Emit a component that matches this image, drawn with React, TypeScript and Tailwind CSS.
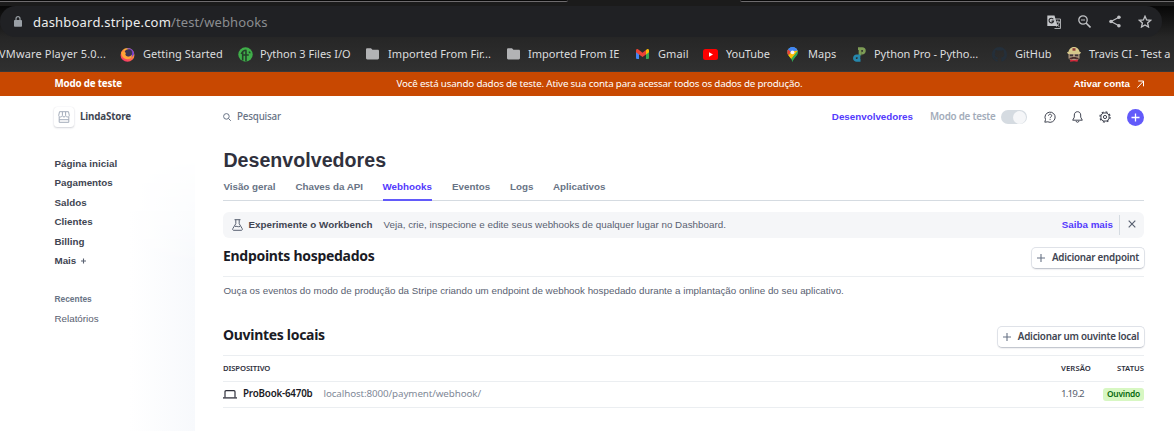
import React, { type ReactNode } from 'react';

const noto = "font-['Noto_Sans',sans-serif]";

function GettingStartedIcon() {
  return (
    <svg width="15" height="15" viewBox="0 0 16 16">
      <defs>
        <linearGradient id="fox" x1="0.8" y1="0" x2="0.3" y2="1">
          <stop offset="0" stopColor="#ffd43c" />
          <stop offset="0.45" stopColor="#ff8a3d" />
          <stop offset="1" stopColor="#f5306a" />
        </linearGradient>
      </defs>
      <circle cx="8" cy="8.4" r="7.4" fill="url(#fox)" />
      <path d="M7 1.6c3.500-1.400 8 1 8 6-1 2-2 3-3.500 3.500C13 6 11 3 7 1.600z" fill="#7a3fd0" />
      <circle cx="9" cy="6.400" r="4" fill="#3b3554" />
      <path d="M1.500 5C3 5 5 4.500 6.500 6.500 5 8 6 10 8.500 10.300c2 .2 3.500-1 4-2.300.6 3-1.500 5-4.500 5C3.500 13 1 9 1.500 5z" fill="#ffa436" />
    </svg>
  );
}

function PythonFilesIcon() {
  return (
    <svg width="15" height="15" viewBox="0 0 16 16">
      <circle cx="8" cy="8" r="7.700" fill="#3fae49" />
      <path d="M3.500 7.500c1-2.800 3-4 5.500-4M8.500 3.500v12M5 5.500v9M5.500 8.500h6M11.500 5.500c.8 0 1.200.5 1.200 1.200" stroke="#24402a" strokeWidth="1.700" fill="none" />
    </svg>
  );
}

function FolderIcon() {
  return (
    <svg width="13" height="12" viewBox="0 0 13 12">
      <path d="M0 1.500C0 .7.600.3 1.300.3H5l1.400 1.500h5.300c.8 0 1.300.5 1.300 1.200v7c0 .9-.5 1.400-1.300 1.400H1.300C.5 11.400 0 10.900 0 10.100z" fill="#b2b3b5" />
    </svg>
  );
}

function GmailIcon() {
  return (
    <svg width="13" height="10" viewBox="0 0 13 10">
      <path d="M0 1.500 3 3.800V10H1a1 1 0 0 1-1-1z" fill="#4285f4" />
      <path d="M13 1.500 10 3.800V10h2a1 1 0 0 0 1-1z" fill="#34a853" />
      <path d="M10 1l1-.7c1-.7 2 0 2 1.200v1.700L10 5.500z" fill="#fbbc04" />
      <path d="M0 3.200V1.500C0 .3 1 -.4 2 .3l4.500 3.400L10 1v4.500L6.500 8 3 5.500z" fill="#ea4335" />
    </svg>
  );
}

function YouTubeIcon() {
  return (
    <svg width="15" height="11" viewBox="0 0 15 11">
      <rect width="15" height="11" rx="2.500" fill="#f00" />
      <path d="M6 3.200v4.600l4-2.300z" fill="#fff" />
    </svg>
  );
}

function MapsIcon() {
  return (
    <svg width="11" height="15" viewBox="0 0 11 15">
      <defs>
        <clipPath id="pin">
          <path d="M5.500 0A5.300 5.300 0 0 0 .2 5.300C.2 9 4.500 10.500 5.500 15c1-4.500 5.300-6 5.300-9.700A5.300 5.300 0 0 0 5.500 0z" />
        </clipPath>
      </defs>
      <g clipPath="url(#pin)">
        <path d="M0 0h11v15H0z" fill="#34a853" />
        <path d="M0 0h11v4L5 8 0 4z" fill="#4285f4" />
        <path d="M0 1.500 4 5 1.500 8.500 0 7z" fill="#ea4335" />
        <path d="M1 8.800 8 .8 11 4 4 12z" fill="#fbbc04" />
        <path d="M3 0h8v3.500L7.500 4 4 4z" fill="#4285f4" />
        <path d="M6 10 11 3.500V11L5 15z" fill="#34a853" />
      </g>
      <circle cx="5.500" cy="5.300" r="1.900" fill="#f5f5f5" />
    </svg>
  );
}

function PythonProIcon() {
  return (
    <svg width="13" height="15" viewBox="0 0 13 15">
      <path d="M7 8.500V2.500M5 1.700h4.200a2.200 2.200 0 1 1 0 4.400H8.500" stroke="#7d9c55" strokeWidth="2.700" fill="none" />
      <path d="M6 7.500V11a2.300 2.300 0 1 1-2.300-2.200h1M4 13.400h3.500" stroke="#2688ad" strokeWidth="2.700" fill="none" />
    </svg>
  );
}

function GitHubIcon() {
  return (
    <svg width="15" height="15" viewBox="0 0 16 16">
      <path fill="#242f3a" d="M8 0C3.580 0 0 3.580 0 8c0 3.540 2.290 6.530 5.470 7.590.4.070.55-.17.55-.38 0-.19-.01-.82-.01-1.490-2.010.37-2.530-.49-2.690-.94-.09-.23-.48-.94-.82-1.130-.28-.15-.68-.52-.01-.53.63-.01 1.080.58 1.230.82.720 1.210 1.870.87 2.330.66.070-.52.280-.87.510-1.070-1.780-.2-3.640-.89-3.640-3.950 0-.87.310-1.590.82-2.150-.08-.2-.36-1.020.08-2.120 0 0 .67-.21 2.200.82.640-.18 1.320-.27 2-.27s1.360.09 2 .27c1.530-1.040 2.200-.82 2.200-.82.440 1.100.160 1.920.080 2.120.510.560.820 1.270.820 2.150 0 3.070-1.870 3.750-3.650 3.950.290.250.540.730.540 1.480 0 1.070-.01 1.930-.01 2.200 0 .21.150.46.550.38A8.010 8.010 0 0 0 16 8c0-4.420-3.580-8-8-8z" />
    </svg>
  );
}

function TravisIcon() {
  return (
    <svg width="14" height="15" viewBox="0 0 14 15">
      <path d="M1.500 5C2 1.500 4.500 0 7 0s5 1.500 5.500 5z" fill="#d9cb8b" />
      <path d="M5.500 1.200h3v2.500h-3z" fill="#8c3a38" />
      <path d="M0 5.200c3-1.400 11-1.400 14 0l-1 1.800H1z" fill="#d5c68b" />
      <path d="M1.500 7h11v4.500l-2.500 2H4l-2.500-2z" fill="#a9937c" />
      <path d="M2.800 7.500h3.200v1.700H2.800zM8 7.500h3.200v1.700H8z" fill="#3e3434" />
      <path d="M2 11.500c2-2 8-2 10 0-1 .9-3 .9-5 .3-2 .6-4 .6-5-.3z" fill="#4a2c2c" />
      <path d="M3.500 12.500 7 13.200l4-.7-.5 2.300L7 14.200l-4 .6z" fill="#d8283b" />
    </svg>
  );
}

type BookmarkProps = { icon?: ReactNode; label: string; slot: string; iconSlot?: string };

function Bookmark({ icon, label, slot, iconSlot = 'w-[22.5px]' }: BookmarkProps) {
  return (
    <div className={`flex shrink-0 items-center ${slot}`}>
      {icon && <span className={`flex shrink-0 items-center ${iconSlot}`}>{icon}</span>}
      <span>{label}</span>
    </div>
  );
}

function BrowserChrome() {
  return (
    <header className={`flex h-[72px] w-full flex-col bg-[#2d2d2d] ${noto}`}>
      <div className="flex h-[6px] shrink-0 justify-between bg-[#1b1b1b]">
        <div className="h-[2px] w-[568px] rounded-br border-b border-[#6d6b6d] bg-[#080808]" />
        <div className="h-[2px] w-[434px] rounded-bl border-b border-[#6d6b6d] bg-[#080808]" />
      </div>
      <div className="flex h-[31px] shrink-0 bg-linear-to-b from-[#080808] to-[#262626]">
        <div className="flex w-[1162px] items-center rounded-full bg-[#202124] pl-[14px]">
          <svg width="8" height="11" viewBox="0 0 8 11">
            <path d="M2 5V2.700a2 2 0 0 1 4 0V5" stroke="#9aa0a6" strokeWidth="1.200" fill="none" />
            <rect y="4" width="8" height="6.700" rx="0.800" fill="#9aa0a6" />
          </svg>
          <div className="ml-[11px] flex-1 text-[13px] leading-[18px]">
            <span className="tracking-[0.2px] text-[#eceded]">dashboard.stripe.com</span>
            <span className="tracking-[0.1px] text-[#8b8d90]">/test/webhooks</span>
          </div>
          <div className="mr-[10px] flex items-center text-[#c0c2c5]">
            <svg className="mr-[17px]" width="14" height="14" viewBox="0 0 14 14">
              <path d="M5 4h8.500v9.500H7.500" fill="none" stroke="#a9abad" />
              <path d="M.3.500h7.200l3 10.500H.3z" fill="#c5c7ca" />
              <path d="M6.300 4.300a2.300 2.300 0 1 0 .3 1.800H4.500" fill="none" stroke="#202124" strokeWidth="1.100" />
              <path d="M8.500 7h4.500M10.800 5.500V7M12.300 7c-.4 2-1.500 3.500-3 4.500M9.300 8.500c.7 1.500 1.700 2.500 3.200 3.300" fill="none" stroke="#c5c7ca" strokeWidth="0.900" />
            </svg>
            <svg className="mr-[18px]" width="13" height="13" viewBox="0 0 13 13" fill="none" stroke="currentColor">
              <circle cx="5" cy="5" r="4.200" strokeWidth="1.300" />
              <path d="M3 5h4" strokeWidth="1" />
              <path d="m8 8 4.500 4.500" strokeWidth="1.600" />
            </svg>
            <svg className="mr-[17px]" width="12" height="13" viewBox="0 0 12 13" fill="currentColor">
              <path d="M10 2.200 2 6.500 10 10.800" fill="none" stroke="currentColor" strokeWidth="1.200" />
              <circle cx="9.900" cy="2.200" r="1.800" />
              <circle cx="2" cy="6.500" r="1.800" />
              <circle cx="9.900" cy="10.800" r="1.800" />
            </svg>
            <svg width="14" height="13" viewBox="0 0 14 13">
              <path d="m7 1.200 1.600 3.700 4 .4-3 2.700.9 4L7 9.900 3.500 12l.9-4-3-2.700 4-.4z" fill="none" stroke="currentColor" strokeWidth="1.300" />
            </svg>
          </div>
        </div>
      </div>
      <nav className="flex h-[35px] items-center overflow-hidden border-b border-[#38383a] bg-linear-to-b from-[#262626] to-[#303030] text-[11px] leading-4 whitespace-nowrap text-[#dcdddf]">
        <Bookmark label="VMware Player 5.0..." slot="-ml-px w-[121px] tracking-[0.15px]" />
        <Bookmark icon={<GettingStartedIcon />} label="Getting Started" slot="w-[118px] tracking-[0.05px]" iconSlot="w-[23px]" />
        <Bookmark icon={<PythonFilesIcon />} label="Python 3 Files I/O" slot="w-[128px]" iconSlot="w-[22px]" />
        <Bookmark icon={<FolderIcon />} label="Imported From Fir..." slot="w-[141px] tracking-[0.06px]" iconSlot="w-[22px]" />
        <Bookmark icon={<FolderIcon />} label="Imported From IE" slot="w-[129px]" iconSlot="w-[21px]" />
        <Bookmark icon={<GmailIcon />} label="Gmail" slot="w-[67px] tracking-[0.1px]" iconSlot="w-[22px]" />
        <Bookmark icon={<YouTubeIcon />} label="YouTube" slot="w-[84px] tracking-[-0.1px]" iconSlot="w-[23px]" />
        <Bookmark icon={<MapsIcon />} label="Maps" slot="w-[66px]" iconSlot="w-[21px]" />
        <Bookmark icon={<PythonProIcon />} label="Python Pro - Pytho..." slot="w-[139px] tracking-[-0.03px]" iconSlot="w-[21px]" />
        <Bookmark icon={<GitHubIcon />} label="GitHub" slot="w-[75px]" iconSlot="w-[23px]" />
        <Bookmark icon={<TravisIcon />} label="Travis CI - Test a" slot="w-[107px] tracking-[-0.05px]" iconSlot="w-[22px]" />
      </nav>
    </header>
  );
}

function TestModeBar() {
  return (
    <div className="grid h-6 grid-cols-[1fr_auto_1fr] items-center bg-[#c84801] pr-[30px] pl-[54.5px] text-[9.8px] text-white">
      <span className={`font-bold tracking-[-0.19px] ${noto}`}>Modo de teste</span>
      <span className={`ml-[0.5px] tracking-[-0.181px] ${noto}`}>
        Você está usando dados de teste. Ative sua conta para acessar todos os dados de produção.
      </span>
      <span className="flex items-center justify-end gap-[7px] font-bold">
        Ativar conta
        <svg width="7" height="8" viewBox="0 0 7 8" fill="none" stroke="currentColor" strokeWidth="1">
          <path d="M.4 7.600 6.300 1.300M1.200 1h5.300v5.300" />
        </svg>
      </span>
    </div>
  );
}

const navItems = ['Página inicial', 'Pagamentos', 'Saldos', 'Clientes', 'Billing'];

function Sidebar() {
  return (
    <aside className="relative w-[195px] shrink-0 pl-[54.5px]">
      <div className="absolute top-[60px] right-0 bottom-0 w-[65px] bg-linear-to-r from-white to-[#f7f9fc] mask-[linear-gradient(to_bottom,transparent,black_110px)]" />
      <div className="relative flex h-[42px] items-center">
        <div className="-ml-[0.5px] flex h-5 w-5 items-center justify-center rounded-[3px] bg-white shadow-[0_1px_2px_rgba(60,66,87,0.22),0_0_1px_rgba(60,66,87,0.12)]">
          <svg width="12" height="12" viewBox="0 0 12 12" fill="none" stroke="#a3acba">
            <path d="M1.500.7h9l.8 3.800c0 1-.6 1.500-1.500 1.500S8 5.500 7.600 4.800C7.300 5.500 6.800 6 6 6s-1.300-.5-1.600-1.200C4 5.500 3.200 6 2.300 6S.7 5.500.7 4.500zM4.400.7v4M7.600.7v4M1.200 6v5.300h9.600V6M1.200 8.700h9.600" />
          </svg>
        </div>
        <span className={`ml-[6px] text-[9.8px] font-bold tracking-[-0.164px] text-[#414552] ${noto}`}>LindaStore</span>
      </div>
      <nav className="relative mt-[15.500px] flex flex-col text-[9.8px] leading-[19.5px] font-bold text-[#414552]">
        {navItems.map((item) => (
          <span key={item}>{item}</span>
        ))}
        <span className="flex items-center gap-[5px]">
          Mais
          <svg width="5" height="6" viewBox="0 0 5 6" stroke="#596171" strokeWidth="1.100">
            <path d="M2.500.5v5M0 3h5" />
          </svg>
        </span>
        <span className="mt-[19.500px] text-[8.4px] text-[#687385]">Recentes</span>
        <span className="-mt-px font-normal text-[#596171]">Relatórios</span>
      </nav>
    </aside>
  );
}

function TopBar() {
  return (
    <div className={`flex h-[42px] items-center text-[9.8px] ${noto}`}>
      <svg className="mb-px" width="8" height="8" viewBox="0 0 8 8" fill="none" stroke="#687385" strokeWidth="1">
        <circle cx="3.400" cy="3.400" r="2.800" />
        <path d="m5.500 5.500 2.300 2.300" />
      </svg>
      <span className="ml-[6px] flex-1 font-medium tracking-[-0.2px] text-[#687385]">Pesquisar</span>
      <span className="font-['Liberation_Sans',sans-serif] font-bold text-[#533afd]">Desenvolvedores</span>
      <span className="ml-[17px] font-semibold tracking-[-0.233px] text-[#a3acba]">Modo de teste</span>
      <span className="ml-[5px] flex h-[14px] w-[26px] items-center justify-end rounded-full bg-[#d5dbe1] pr-[0.5px]">
        <span className="h-[13px] w-[13px] rounded-full bg-[#f5f6f8]" />
      </span>
      <svg className="ml-[17px]" width="12" height="12" viewBox="0 0 12 12" fill="none" stroke="#414552">
        <path d="M.8 11.200 1.500 8.500A5.100 5.100 0 1 1 3.800 10.800z" />
        <path d="M4.500 4.700c0-2 3.200-2 3.200 0C7.700 6 6.100 5.800 6.100 7.200M6.100 8.100v1" />
      </svg>
      <svg className="ml-4" width="11" height="12" viewBox="0 0 11 12" fill="none" stroke="#414552">
        <path d="M5.500.7C3.500.7 2.300 2.200 2.300 4v2.200L.7 9.200h9.600L8.700 6.200V4c0-1.800-1.200-3.300-3.200-3.300zM4 10c.3 1.700 2.700 1.700 3 0" />
      </svg>
      <svg className="ml-[16.500px]" width="12" height="12" viewBox="0 0 12 12" fill="none" stroke="#414552">
        <circle cx="6" cy="6" r="1.600" />
        <circle cx="6" cy="6" r="4.100" />
        <circle cx="6" cy="6" r="5.100" strokeWidth="1.200" strokeDasharray="2 2.005" />
      </svg>
      <span className="ml-4 flex h-[17px] w-[17px] items-center justify-center rounded-full bg-[#625afa]">
        <svg width="9" height="9" viewBox="0 0 9 9" stroke="white" strokeWidth="1.300">
          <path d="M4.500.5v8M.5 4.500h8" />
        </svg>
      </span>
    </div>
  );
}

function Tabs() {
  return (
    <div className="flex h-[24px] shrink-0 border-b border-[#d5dbe1] text-[9.8px] leading-[19px] font-bold text-[#687385]">
      <span className="w-[72px] pl-[0.4px]">Visão geral</span>
      <span className="w-[87.500px] pl-[0.4px]">Chaves da API</span>
      <span className="mr-[20px] h-6 w-[49.500px] border-b-2 border-[#625afa] text-[#533afd]">Webhooks</span>
      <span className="w-[58px]">Eventos</span>
      <span className="w-[43px]">Logs</span>
      <span className="tracking-[0.03px]">Aplicativos</span>
    </div>
  );
}

function WorkbenchBanner() {
  return (
    <div className="mt-[11px] flex h-[26px] shrink-0 items-center rounded-[6px] bg-[#f5f6f8] pl-[9px] text-[9.8px] text-[#596171]">
      <svg width="11" height="12" viewBox="0 0 11 12" fill="none" stroke="#596171">
        <path d="M2.500.7h6M3.800.7v4L.8 9.600c-.5.900-.1 1.700.8 1.700h7.800c.9 0 1.300-.8.800-1.700L7.200 4.700v-4M3 7.500c1.500-.8 2.500.8 5 0" />
      </svg>
      <span className="ml-[5.500px] font-bold tracking-[0.026px] text-[#414552]">Experimente o Workbench</span>
      <span className="ml-[11px] flex-1 tracking-[0.02px]">
        Veja, crie, inspecione e edite seus webhooks de qualquer lugar no Dashboard.
      </span>
      <span className="font-bold text-[#533afd]">Saiba mais</span>
      <span className="ml-[5.500px] h-5 w-px bg-[#d5dbe1]" />
      <svg className="mr-[8.500px] mb-[3px] ml-[8px]" width="8" height="8" viewBox="0 0 8 8" stroke="#596171" strokeWidth="1.200">
        <path d="m.7.700 6.600 6.600M7.300.700.700 7.300" />
      </svg>
    </div>
  );
}

function SectionHeader({ title, action }: { title: string; action: string }) {
  return (
    <div className={`flex h-[39px] shrink-0 justify-between border-b border-[#ebeef1] ${noto}`}>
      <h2 className="mt-[8px] text-[14px] leading-[20px] font-bold tracking-[-0.3px] text-[#1a1b25]">{title}</h2>
      <button className="mt-[9px] -mr-px flex h-[22px] items-center rounded-[5px] border border-[#dfe2e8] border-b-[#c3c7cf] bg-white pr-[5px] pl-[5px] text-[9.8px] font-semibold tracking-[-0.24px] text-[#414552] shadow-[0_1px_1px_rgba(60,66,87,0.08)]">
        <svg className="mr-[7px] mb-px" width="8" height="8" viewBox="0 0 8 8" stroke="#687385" strokeWidth="1.100">
          <path d="M4 0v8M0 4h8" />
        </svg>
        {action}
      </button>
    </div>
  );
}

function ListenersTable() {
  return (
    <div className={noto}>
      <div className="flex h-[26px] items-center border-b border-[#ebeef1] pt-px text-[7.7px] font-semibold text-[#30313d]">
        <span className="w-[838px] tracking-[-0.12px]">DISPOSITIVO</span>
        <span className="flex-1 tracking-[0.1px]">VERSÃO</span>
        <span>STATUS</span>
      </div>
      <div className="flex h-[26px] items-center border-b border-[#ebeef1] text-[9.8px]">
        <svg width="14" height="9" viewBox="0 0 14 9" fill="none" stroke="#30313d">
          <path d="M2 7.500V1.700c0-.6.300-1 1-1h8c.7 0 1 .4 1 1v5.800" strokeWidth="1.200" />
          <path d="M0 7.900h14" strokeWidth="1.300" />
        </svg>
        <span className="ml-[6px] w-[80.500px] font-semibold tracking-[-0.2px] text-[#1a1b25]">ProBook-6470b</span>
        <span className="w-[737.500px] tracking-[-0.098px] text-[#7f8998]">localhost:8000/payment/webhook/</span>
        <span className="flex-1 tracking-[-0.82px] text-[#596171]">1.19.2</span>
        <span className="mb-px flex h-[13px] w-[41px] items-center justify-center rounded-[3px] bg-[#d7f7c2] text-[8.4px] font-semibold tracking-[-0.234px] text-[#05690d]">
          Ouvindo
        </span>
      </div>
    </div>
  );
}

export default function App() {
  return (
    <div className="flex h-[431px] w-[1174px] flex-col overflow-hidden bg-white font-['Liberation_Sans',Arial,sans-serif]">
      <BrowserChrome />
      <TestModeBar />
      <div className="flex flex-1">
        <Sidebar />
        <main className="ml-[28px] flex w-[921px] flex-col">
          <TopBar />
          <h1 className="mt-[9px] mb-[4px] h-[26px] pl-[0.4px] text-[19.6px] leading-[26px] font-bold tracking-[0.03px] text-[#30313d]">
            Desenvolvedores
          </h1>
          <Tabs />
          <WorkbenchBanner />
          <SectionHeader title="Endpoints hospedados" action="Adicionar endpoint" />
          <p className="mt-[4px] h-[36px] pl-[0.4px] text-[9.8px] leading-[20px] tracking-[0.013px] text-[#596171]">
            Ouça os eventos do modo de produção da Stripe criando um endpoint de webhook hospedado durante a implantação
            online do seu aplicativo.
          </p>
          <SectionHeader title="Ouvintes locais" action="Adicionar um ouvinte local" />
          <ListenersTable />
        </main>
      </div>
    </div>
  );
}
